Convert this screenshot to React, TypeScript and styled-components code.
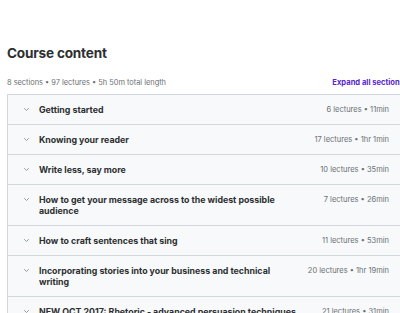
import { createGlobalStyle } from "styled-components";
import styled from "styled-components";

const GlobalStyle = createGlobalStyle`
  html, body {
    margin: 0;
    padding: 0;
    background: #ffffff;
    overflow: hidden;
  }
  body {
    font-family: Inter, "Liberation Sans", sans-serif;
    color: #2d2f31;
  }
`;

const Page = styled.div`
  width: 397px;
  padding: 43px 0 0 7px;
`;

const Heading = styled.h2`
  margin: 0;
  font-size: 13.6px;
  line-height: 20px;
  font-weight: 700;
  letter-spacing: -0.2px;
  color: #2d2f31;
`;

const MetaBar = styled.div`
  display: flex;
  align-items: center;
  justify-content: space-between;
  margin-top: 12px;
  margin-bottom: 5px;
  height: 14px;
`;

const Meta = styled.span`
  font-size: 7.4px;
  color: #6a6f73;
`;

const ExpandLink = styled.button`
  border: 0;
  background: none;
  padding: 0;
  font-family: inherit;
  font-size: 7.6px;
  font-weight: 700;
  color: #5624d0;
  cursor: pointer;
  white-space: nowrap;
`;

const Panel = styled.div`
  border: 1px solid #d1d7dc;
  border-bottom: 0;
`;

const Row = styled.div`
  display: flex;
  align-items: flex-start;
  gap: 20px;
  padding: 9px 14px 9px 15px;
  background: #f7f9fa;
  border-bottom: 1px solid #d1d7dc;
`;

const TitleWrap = styled.div`
  flex: 1;
  display: flex;
  align-items: flex-start;
  gap: 9px;
`;

const Chevron = styled.svg`
  flex: none;
  width: 7px;
  height: 11px;
`;

const Title = styled.span`
  font-size: 8.8px;
  line-height: 11px;
  font-weight: 700;
  color: #2d2f31;
`;

const Info = styled.span`
  flex: none;
  font-size: 7.5px;
  line-height: 11px;
  color: #6a6f73;
`;

const sections = [
  { title: "Getting started", info: "6 lectures • 11min" },
  { title: "Knowing your reader", info: "17 lectures • 1hr 1min" },
  { title: "Write less, say more", info: "10 lectures • 35min" },
  {
    title: "How to get your message across to the widest possible audience",
    info: "7 lectures • 26min",
  },
  { title: "How to craft sentences that sing", info: "11 lectures • 53min" },
  {
    title: "Incorporating stories into your business and technical writing",
    info: "20 lectures • 1hr 19min",
  },
  {
    title: "NEW OCT 2017: Rhetoric - advanced persuasion techniques",
    info: "21 lectures • 31min",
  },
  { title: "Bonus material", info: "5 lectures • 14min" },
];

const App = () => {
  return (
    <Page>
      <GlobalStyle />
      <Heading>Course content</Heading>
      <MetaBar>
        <Meta>8 sections • 97 lectures • 5h 50m total length</Meta>
        <ExpandLink>Expand all sections</ExpandLink>
      </MetaBar>
      <Panel>
        {sections.map((s) => (
          <Row key={s.title}>
            <TitleWrap>
              <Chevron viewBox="0 0 7 11">
                <path
                  d="M1.5 4.5 L3.5 6.5 L5.5 4.5"
                  fill="none"
                  stroke="#8a8f93"
                  strokeWidth="0.9"
                  strokeLinecap="round"
                  strokeLinejoin="round"
                />
              </Chevron>
              <Title>{s.title}</Title>
            </TitleWrap>
            <Info>{s.info}</Info>
          </Row>
        ))}
      </Panel>
    </Page>
  );
};

export default App;
